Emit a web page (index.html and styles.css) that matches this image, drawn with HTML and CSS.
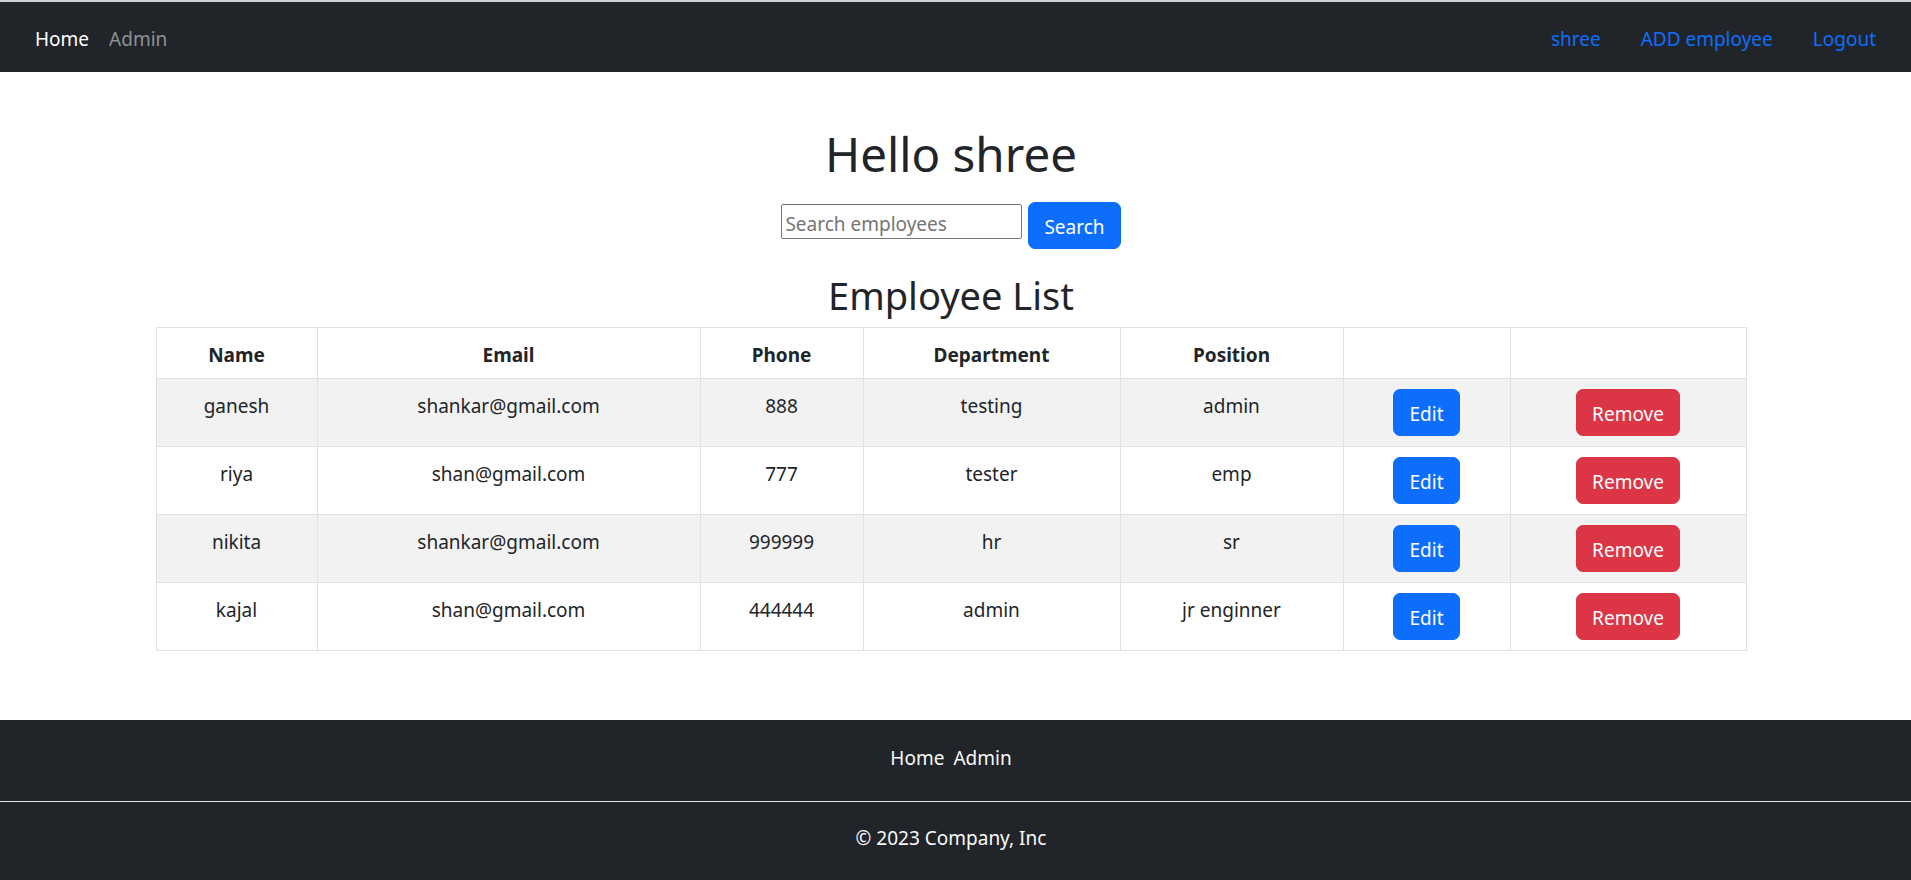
FILE: index.html
```html
<!DOCTYPE html>
<html lang="en">
<head>
<meta charset="utf-8">
<title>Employees</title>
<link rel="stylesheet" href="styles.css">
</head>
<body>
<nav class="navbar">
  <div class="nav-group">
    <a class="nav-link nav-link-active" href="#">Home</a>
    <a class="nav-link nav-link-muted" href="#">Admin</a>
  </div>
  <div class="nav-group nav-group-right">
    <a class="nav-link nav-link-primary" href="#">shree</a>
    <a class="nav-link nav-link-primary" href="#">ADD employee</a>
    <a class="nav-link nav-link-primary" href="#">Logout</a>
  </div>
</nav>

<main class="main">
  <h1 class="greeting">Hello shree</h1>
  <form class="search">
    <input class="search-input" type="text" placeholder="Search employees">
    <button class="btn btn-primary" type="button">Search</button>
  </form>
  <h2 class="list-title">Employee List</h2>
  <table class="emp-table">
    <colgroup>
      <col class="col-name">
      <col class="col-email">
      <col class="col-phone">
      <col class="col-dept">
      <col class="col-pos">
      <col class="col-edit">
      <col class="col-remove">
    </colgroup>
    <thead>
      <tr>
        <th>Name</th>
        <th>Email</th>
        <th>Phone</th>
        <th>Department</th>
        <th>Position</th>
        <th></th>
        <th></th>
      </tr>
    </thead>
    <tbody>
      <tr class="striped">
        <td>ganesh</td>
        <td>shankar@gmail.com</td>
        <td>888</td>
        <td>testing</td>
        <td>admin</td>
        <td><button class="btn btn-primary" type="button">Edit</button></td>
        <td><button class="btn btn-danger" type="button">Remove</button></td>
      </tr>
      <tr>
        <td>riya</td>
        <td>shan@gmail.com</td>
        <td>777</td>
        <td>tester</td>
        <td>emp</td>
        <td><button class="btn btn-primary" type="button">Edit</button></td>
        <td><button class="btn btn-danger" type="button">Remove</button></td>
      </tr>
      <tr class="striped">
        <td>nikita</td>
        <td>shankar@gmail.com</td>
        <td>999999</td>
        <td>hr</td>
        <td>sr</td>
        <td><button class="btn btn-primary" type="button">Edit</button></td>
        <td><button class="btn btn-danger" type="button">Remove</button></td>
      </tr>
      <tr>
        <td>kajal</td>
        <td>shan@gmail.com</td>
        <td>444444</td>
        <td>admin</td>
        <td>jr enginner</td>
        <td><button class="btn btn-primary" type="button">Edit</button></td>
        <td><button class="btn btn-danger" type="button">Remove</button></td>
      </tr>
    </tbody>
  </table>
</main>

<footer class="footer">
  <nav class="footer-nav">
    <a class="footer-link" href="#">Home</a>
    <a class="footer-link" href="#">Admin</a>
  </nav>
  <p class="copyright">© 2023 Company, Inc</p>
</footer>
</body>
</html>
```

FILE: styles.css
```css
* {
  box-sizing: border-box;
}

html, body {
  margin: 0;
  padding: 0;
}

body {
  font-family: "Noto Sans", "Open Sans", sans-serif;
  font-size: 19px;
  line-height: 30px;
  color: #212529;
  background: #ffffff;
}

a {
  text-decoration: none;
}

/* ---------- Navbar ---------- */
.navbar {
  display: flex;
  justify-content: space-between;
  align-items: center;
  height: 72px;
  padding: 3px 25px 0 25px;
  border-top: 2px solid #cfd1d3;
  background: #212529;
}

.nav-group {
  display: flex;
  align-items: center;
}

.nav-group-right {
  gap: 20px;
}

.nav-link {
  display: block;
  padding: 0 10px;
  line-height: 30px;
}

.nav-link-active {
  color: #ffffff;
}

.nav-link-muted {
  color: #8f9194;
}

.nav-link-primary {
  color: #0d6efd;
}

/* ---------- Main ---------- */
.main {
  display: flex;
  flex-direction: column;
  align-items: center;
  padding: 0 9px 69px 0;
}

.greeting {
  margin: 52px 0 0 0;
  font-size: 47.5px;
  line-height: 60px;
  font-weight: 400;
}

.search {
  display: flex;
  align-items: flex-start;
  gap: 6px;
  margin: 18px 0 0 0;
}

.search-input {
  width: 241px;
  height: 35px;
  margin-top: 2px;
  padding: 4px 3px 0 3px;
  border: 1px solid #767676;
  border-radius: 2px;
  font-family: "Noto Sans", "Open Sans", sans-serif;
  font-size: 19px;
  color: #212529;
  background: #ffffff;
}

.search-input::placeholder {
  color: #757575;
}

.btn {
  display: inline-block;
  padding: 8.5px 15px 6.5px 15px;
  border: 1px solid transparent;
  border-radius: 7px;
  font-family: "Noto Sans", "Open Sans", sans-serif;
  font-size: 19px;
  line-height: 30px;
  color: #ffffff;
  cursor: pointer;
}

.btn-primary {
  background: #0d6efd;
  border-color: #0d6efd;
}

.btn-danger {
  background: #dc3545;
  border-color: #dc3545;
}

.list-title {
  margin: 22px 0 8px 0;
  font-size: 38px;
  line-height: 48px;
  font-weight: 400;
}

/* ---------- Table ---------- */
.emp-table {
  width: 1590px;
  border-collapse: collapse;
  table-layout: fixed;
}

.col-name { width: 161px; }
.col-email { width: 383px; }
.col-phone { width: 163px; }
.col-dept { width: 257px; }
.col-pos { width: 223px; }
.col-edit { width: 167px; }
.col-remove { width: 236px; }

.emp-table th,
.emp-table td {
  padding: 10px;
  border: 1px solid #dee2e6;
  text-align: center;
  vertical-align: top;
  line-height: 34px;
}

.emp-table th {
  padding: 10px 10px 6px 10px;
  font-weight: 700;
}

.emp-table .btn {
  vertical-align: top;
}

.emp-table .striped td {
  background: #f2f2f2;
}

/* ---------- Footer ---------- */
.footer {
  background: #212529;
  color: #f8f9fa;
  padding-bottom: 40px;
}

.footer-nav {
  display: flex;
  justify-content: center;
  gap: 9px;
  padding: 23px 9px 28px 0;
  border-bottom: 1px solid #dee2e6;
}

.footer-link {
  color: #f8f9fa;
}

.copyright {
  margin: 0;
  padding: 21px 9px 0 0;
  text-align: center;
}
```
